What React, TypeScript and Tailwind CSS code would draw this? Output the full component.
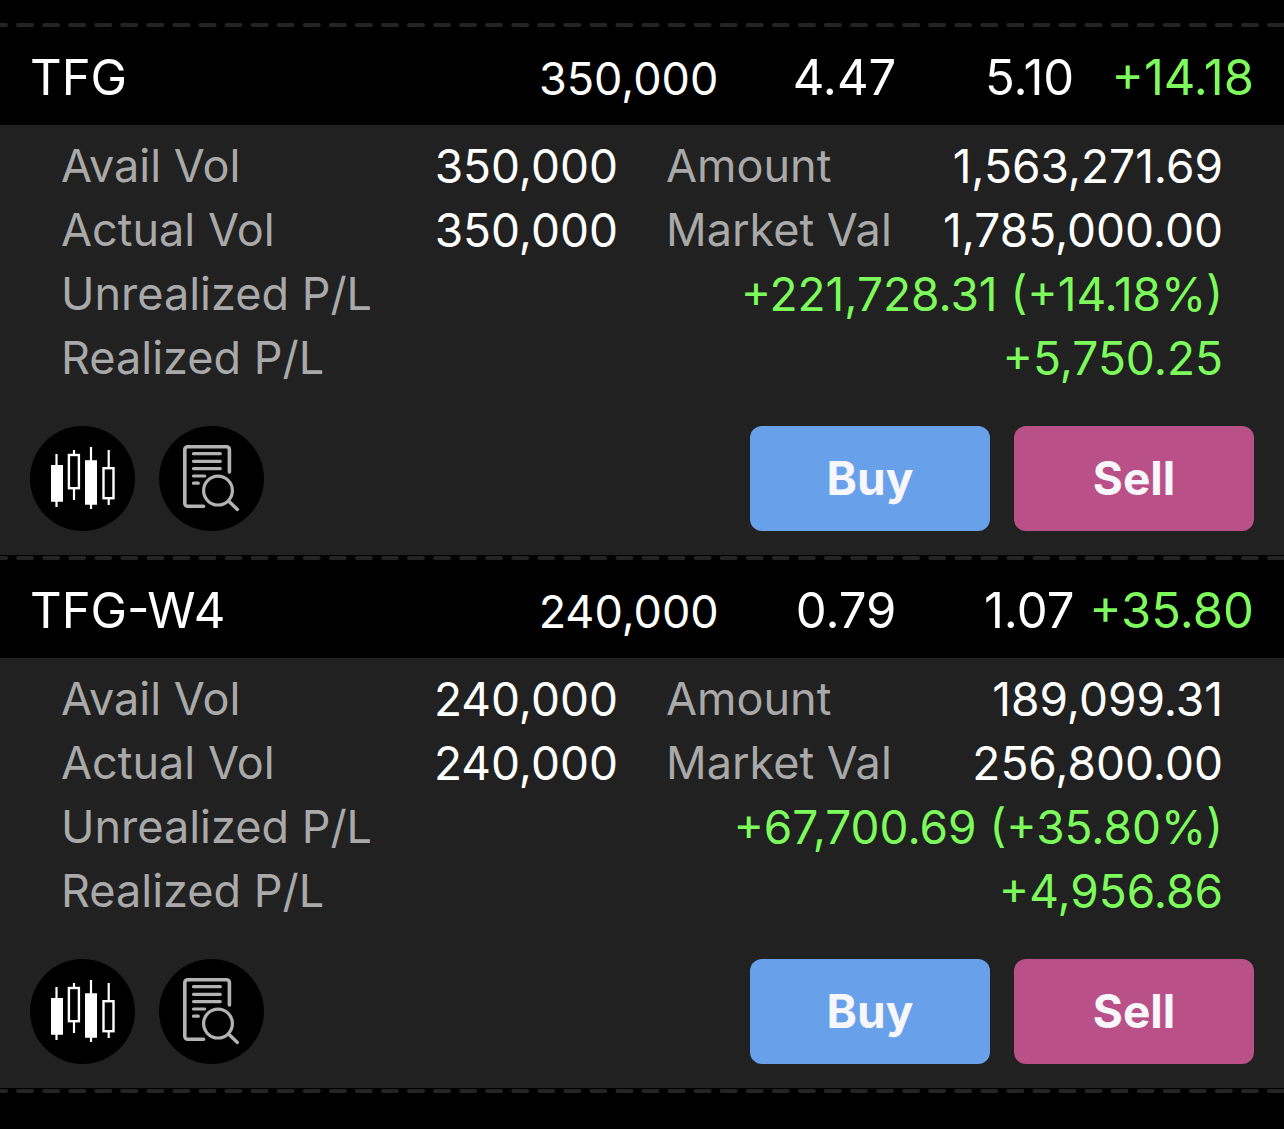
import React from "react";

interface Holding {
  symbol: string;
  volume: string;
  avgPrice: string;
  lastPrice: string;
  change: string;
  amount: string;
  marketVal: string;
  unrealized: string;
  realized: string;
}

const holdings: Holding[] = [
  {
    symbol: "TFG",
    volume: "350,000",
    avgPrice: "4.47",
    lastPrice: "5.10",
    change: "+14.18",
    amount: "1,563,271.69",
    marketVal: "1,785,000.00",
    unrealized: "+221,728.31 (+14.18%)",
    realized: "+5,750.25",
  },
  {
    symbol: "TFG-W4",
    volume: "240,000",
    avgPrice: "0.79",
    lastPrice: "1.07",
    change: "+35.80",
    amount: "189,099.31",
    marketVal: "256,800.00",
    unrealized: "+67,700.69 (+35.80%)",
    realized: "+4,956.86",
  },
];

const DashedLine: React.FC = () => (
  <svg className="block h-1.5 w-full" aria-hidden="true">
    <line
      x1="-8"
      y1="3"
      x2="101%"
      y2="3"
      stroke="#242424"
      strokeWidth="4"
      strokeLinecap="round"
      strokeDasharray="14 12.06"
    />
  </svg>
);

const CandlesIcon: React.FC = () => (
  <svg viewBox="0 0 105 105" className="size-full" aria-hidden="true">
    <g stroke="#fff" strokeWidth="2.2" fill="none">
      <path d="M26.5 28v53M44 24v4M44 63v11M61 21v62M78.7 24v17M78.7 73v6" />
      <rect x="38.9" y="29" width="10" height="33.2" strokeWidth="2.4" />
      <rect x="73.5" y="42.2" width="10" height="30" strokeWidth="2.4" />
    </g>
    <path d="M21 39h12v36.7H21zM55 34.3h12v44.4H55z" fill="#fff" />
  </svg>
);

const DetailIcon: React.FC = () => (
  <svg viewBox="0 0 105 105" className="size-full" aria-hidden="true">
    <g stroke="#b3b3b3" strokeWidth="3.6" strokeLinecap="round" fill="none">
      <path d="M70.4 46V23.7a3 3 0 0 0-3-3H28.8a3 3 0 0 0-3 3v53.6a3 3 0 0 0 3 3h15.8" />
      <path
        d="M34.5 27.7h26.8M34.5 35.3h26.8M34.5 42.6h26.8M34.5 50h11.2M34.5 57.2h4.8"
        strokeWidth="3.2"
      />
      <circle cx="59" cy="64.6" r="14.4" strokeWidth="3.2" />
      <path d="M69.8 75.2l8.6 8.2" strokeWidth="3.4" />
    </g>
  </svg>
);

const Row: React.FC<{
  label: string;
  value: string;
  wide?: boolean;
}> = ({ label, value, wide }) => (
  <div
    className={
      wide
        ? "col-span-2 flex justify-between text-[#7dfb5c]"
        : "flex justify-between text-white"
    }
  >
    <dt className="text-[45px] text-[#a9a9a9]">{label}</dt>
    <dd className="text-[46px]">{value}</dd>
  </div>
);

const HoldingCard: React.FC<{ holding: Holding }> = ({ holding }) => (
  <article>
    <DashedLine />
    <header className="grid grid-cols-[2.86fr_1fr_1fr_1fr_1.01fr] items-baseline pt-[18px] pb-3.5 pl-[30px] pr-[30px] text-right text-[49px] leading-[64px]">
      <h2 className="text-left">{holding.symbol}</h2>
      <span className="text-[45px]">{holding.volume}</span>
      <span>{holding.avgPrice}</span>
      <span>{holding.lastPrice}</span>
      <span className="text-[#7dfb5c]">{holding.change}</span>
    </header>
    <div className="bg-[#212121] pt-[9px] pb-6">
      <dl className="grid grid-cols-2 gap-x-12 px-[61px] leading-[64px]">
        <Row label="Avail Vol" value={holding.volume} />
        <Row label="Amount" value={holding.amount} />
        <Row label="Actual Vol" value={holding.volume} />
        <Row label="Market Val" value={holding.marketVal} />
        <Row label="Unrealized P/L" value={holding.unrealized} wide />
        <Row label="Realized P/L" value={holding.realized} wide />
      </dl>
      <div className="mt-9 flex gap-6 px-[30px]">
        <button
          type="button"
          aria-label="Chart"
          className="size-[105px] rounded-full bg-black"
        >
          <CandlesIcon />
        </button>
        <button
          type="button"
          aria-label="Details"
          className="size-[105px] rounded-full bg-black"
        >
          <DetailIcon />
        </button>
        <button
          type="button"
          className="ml-auto h-[105px] w-60 rounded-xl bg-[#68a1ea] text-[46px] font-bold text-[#f7f7fb]"
        >
          Buy
        </button>
        <button
          type="button"
          className="h-[105px] w-60 rounded-xl bg-[#b95188] text-[46px] font-bold text-[#f7f7fb]"
        >
          Sell
        </button>
      </div>
    </div>
  </article>
);

const App: React.FC = () => {
  return (
    <main className="min-h-screen bg-black pt-[22px] font-['Inter',sans-serif] text-white">
      {holdings.map((holding) => (
        <HoldingCard key={holding.symbol} holding={holding} />
      ))}
      <DashedLine />
    </main>
  );
};

export default App;
